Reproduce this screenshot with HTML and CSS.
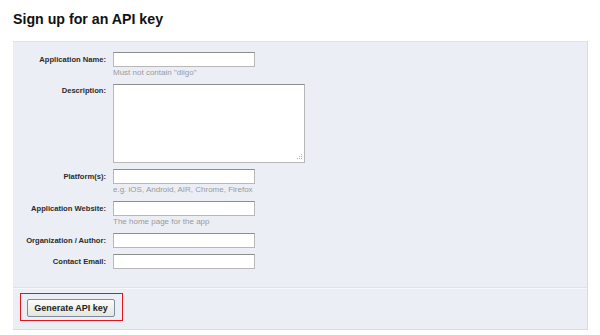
FILE: index.html
```html
<!DOCTYPE html>
<html lang="en">
<head>
    <meta charset="UTF-8">
    <title>Sign up for an API key</title>
    <link rel="stylesheet" href="styles.css">
</head>
<body>

<div class="page">
  <h1 class="title">Sign up for an API key</h1>

  <form class="panel">
    <div class="fields">
      <label class="label" for="appName">Application Name:</label>
      <div class="field">
        <input class="input" id="appName" type="text">
        <div class="hint">Must not contain "diigo"</div>
      </div>

      <label class="label label-top" for="desc">Description:</label>
      <div class="field">
        <div class="textarea-wrap">
          <textarea class="textarea" id="desc"></textarea>
          <!-- resize grip -->
          <svg class="grip" width="7" height="7" viewBox="0 0 7 7">
            <g fill="#b4b4b4">
              <rect x="5" y="0" width="1" height="1"/>
              <rect x="3" y="2" width="1" height="1"/>
              <rect x="5" y="2" width="1" height="1"/>
              <rect x="1" y="4" width="1" height="1"/>
              <rect x="3" y="4" width="1" height="1"/>
              <rect x="5" y="4" width="1" height="1"/>
            </g>
          </svg>
        </div>
      </div>

      <label class="label" for="platform">Platform(s):</label>
      <div class="field">
        <input class="input" id="platform" type="text">
        <div class="hint">e.g. iOS, Android, AIR, Chrome, Firefox</div>
      </div>

      <label class="label" for="website">Application Website:</label>
      <div class="field">
        <input class="input" id="website" type="text">
        <div class="hint">The home page for the app</div>
      </div>

      <label class="label" for="org">Organization / Author:</label>
      <div class="field">
        <input class="input" id="org" type="text">
      </div>

      <label class="label" for="email">Contact Email:</label>
      <div class="field">
        <input class="input" id="email" type="text">
      </div>
    </div>

    <div class="footer">
      <div class="highlight">
        <button class="btn" type="button">Generate API key</button>
      </div>
    </div>
  </form>
</div>

</body>
</html>
```

FILE: styles.css
```css
body, html {
  margin: 0;
  padding: 0;
  background: #fff;
  font-family: 'Liberation Sans', Arial, sans-serif;
}

.page {
  padding: 0 12px 0 13px;
}

.title {
  margin: 0;
  padding-top: 11px;
  height: 30px;
  font-size: 14.2px;
  font-weight: bold;
  color: #111;
}

.panel {
  background: #eceef6;
  border-top: 1px solid #e0e3ec;
  border-right: 1px solid #d9dbe2;
  border-bottom: 1px solid #d9dbe2;
}

.fields {
  display: grid;
  grid-template-columns: 93px 1fr;
  column-gap: 7px;
  row-gap: 6px;
  padding: 10px 0 18px;
}

.label {
  font-size: 7.6px;
  font-weight: bold;
  color: #2b2b2b;
  text-align: right;
  line-height: 15px;
}

.label-top {
  line-height: 14px;
}

.field {
  display: flex;
  flex-direction: column;
  align-items: flex-start;
}

.input {
  box-sizing: border-box;
  width: 142px;
  height: 15px;
  margin: 0;
  padding: 0 2px;
  background: #fff;
  border: 1px solid #b8b8b8;
  border-top-color: #8e8e8e;
  font-size: 8px;
}

.textarea-wrap {
  position: relative;
}

.textarea {
  display: block;
  box-sizing: border-box;
  width: 192px;
  height: 79px;
  margin: 0;
  padding: 2px;
  background: #fff;
  border: 1px solid #b8b8b8;
  border-top-color: #8e8e8e;
  font-size: 8px;
  resize: none;
}

.grip {
  position: absolute;
  right: 2px;
  bottom: 2px;
}

.hint {
  margin-top: 1px;
  font-size: 8px;
  line-height: 10px;
  color: #9a9a9a;
}

.footer {
  border-top: 1px solid #dfe2ea;
  box-shadow: inset 0 1px 0 #f7f8fc;
  padding: 5px 0 8px 7px;
}

.highlight {
  display: inline-block;
  border: 1px solid #e0161c;
  padding: 5px 7px 3px 6px;
}

.btn {
  display: block;
  width: 88px;
  height: 18px;
  margin: 0;
  padding: 0;
  font-family: 'Liberation Sans', Arial, sans-serif;
  font-size: 9px;
  font-weight: bold;
  color: #222;
  background: linear-gradient(#fbfbf8, #e6e6e0);
  border: 1px solid #7d8da0;
  border-radius: 2px;
}
```
